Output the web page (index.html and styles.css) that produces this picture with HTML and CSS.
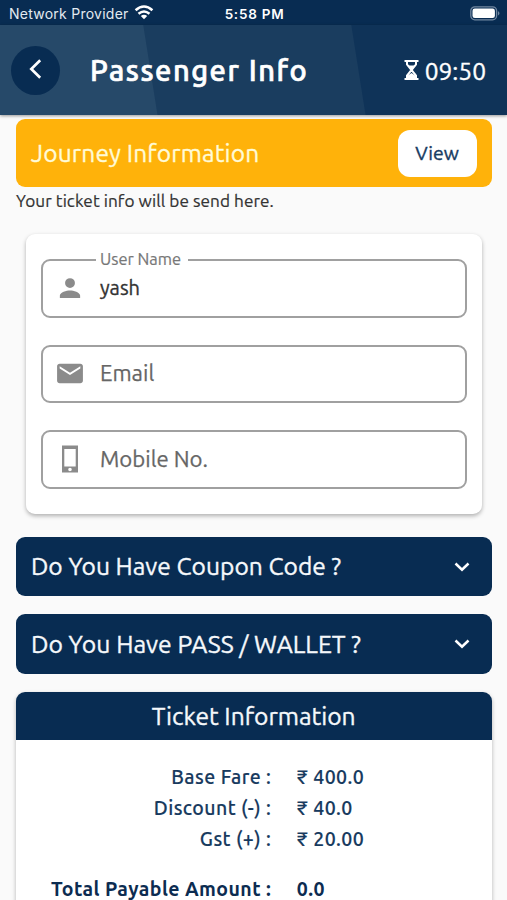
FILE: index.html
```html
<!DOCTYPE html>
<html lang="en">
<head>
<meta charset="utf-8">
<title>Passenger Info</title>
<link rel="stylesheet" href="styles.css">
</head>
<body>
<div class="status">
  <div class="carrier"><span class="carrier-name">Network Provider</span>
    <svg class="wifi" width="20" height="15" viewBox="0 0 20 15" fill="none" stroke="#fff" stroke-width="2.5"><path d="M1.6 5.3Q10-2.3 18.4 5.3M4.5 8.8Q10 4.200 15.5 8.8"/><path d="M6.800 11Q10 8.400 13.200 11L10 14.200Z" fill="#fff" stroke="none"/></svg>
  </div>
  <span class="clock">5:58 PM</span>
  <svg class="battery" width="31" height="15" viewBox="0 0 31 15"><rect x=".8" y=".8" width="25.8" height="13" rx="4" fill="none" stroke="#7187a0" stroke-width="1.3"/><rect x="2.5" y="2.5" width="22.4" height="9.6" rx="2.3" fill="#fff"/><path d="M28 5Q31 7.3 28 9.6Z" fill="#7187a0"/></svg>
</div>
<header class="bar">
  <button class="back" aria-label="Back"><svg width="14" height="20" viewBox="0 0 14 20" fill="none" stroke="#fff" stroke-width="2.7"><path d="M11.200 1.3L2.300 10L11.200 18.7"/></svg></button>
  <h1 class="title">Passenger Info</h1>
  <div class="timer"><svg width="15" height="20" viewBox="0 0 15 20"><path d="M.5 1H14.5M.5 19H14.5" stroke="#fff" stroke-width="2"/><path d="M3 2V4.5L7.5 10L3 15.500V18M12 2V4.500L7.500 10L12 15.500V18" fill="none" stroke="#fff" stroke-width="2"/><path d="M4.500 5.500H10.500L7.500 9.500ZM3 18V16L7.500 13L12 16V18Z" fill="#fff"/></svg><span class="time">09:50</span></div>
</header>
<main class="content">
  <section class="journey"><span class="journey-label">Journey Information</span><button class="view"><span class="view-label">View</span></button></section>
  <p class="note">Your ticket info will be send here.</p>
  <section class="form">
    <div class="field filled">
      <span class="float">User Name</span>
      <svg class="icon" width="32" height="32" viewBox="0 0 24 24"><path fill="#8b8b8b" d="M12 12a3.700 3.700 0 1 0 0-7.400 3.700 3.700 0 0 0 0 7.400zM4.400 19.500v-1.800c0-2.500 5-3.900 7.600-3.900s7.600 1.400 7.600 3.900v1.800z"/></svg>
      <span class="value">yash</span>
    </div>
    <div class="field">
      <svg class="icon" width="31" height="31" viewBox="0 0 24 24"><path fill="#8b8b8b" d="M20 4.500H4c-1.100 0-2 .8-2 1.800v11.300c0 1.100.9 1.900 2 1.900h16c1.100 0 2-.8 2-1.900V6.300c0-1-.9-1.800-2-1.800zm0 3.700l-8 5-8-5V6.400l8 5 8-5z"/></svg>
      <span class="hint email">Email</span>
    </div>
    <div class="field">
      <svg class="icon" width="32" height="32" viewBox="0 0 32 32"><path fill="#8b8b8b" fill-rule="evenodd" d="M8 2.500H24V29.500H8ZM10.300 6V23.500H21.700V6ZM16 24.700a1.800 1.800 0 1 0 0 3.600a1.800 1.800 0 0 0 0-3.600Z"/></svg>
      <span class="hint mobile">Mobile No.</span>
    </div>
  </section>
  <section class="expand"><span class="coupon">Do You Have Coupon Code ?</span><svg width="16" height="10" viewBox="0 0 16 10" fill="none" stroke="#fff" stroke-width="2.500"><path d="M1.500 1.500L8 7.700L14.500 1.500"/></svg></section>
  <section class="expand"><span class="wallet">Do You Have PASS / WALLET ?</span><svg width="16" height="10" viewBox="0 0 16 10" fill="none" stroke="#fff" stroke-width="2.500"><path d="M1.500 1.500L8 7.700L14.500 1.500"/></svg></section>
  <section class="ticket">
    <h2 class="ticket-head"><span class="ticket-title">Ticket Information</span></h2>
    <div class="fares">
      <span class="key base">Base Fare :</span><span class="amount">₹ 400.0</span>
      <span class="key discount">Discount (-) :</span><span class="amount">₹ 40.0</span>
      <span class="key gst">Gst (+) :</span><span class="amount">₹ 20.00</span>
      <span class="key total">Total Payable Amount :</span><span class="amount total sum">0.0</span>
    </div>
  </section>
</main>
</body>
</html>
```
FILE: styles.css
```css
* { box-sizing: border-box; }
html, body { height: 900px; overflow: hidden; }
body { margin: 0; background: #fafafa; font-family: Ubuntu, "Noto Sans", sans-serif; color: #333; display: flex; flex-direction: column; -webkit-text-stroke: .35px currentColor; }
h1, h2, p { margin: 0; }
button { border: 0; padding: 0; font: inherit; }
svg { display: block; flex: none; }
span { white-space: nowrap; }
.status { height: 25px; flex: none; background: #082c52; color: #fff; display: grid; grid-template-columns: 1fr auto 1fr; align-items: center; padding: 2px 6px 0 9px; font-family: Inter, sans-serif; font-size: 14px; -webkit-text-stroke: 0; }
.carrier { display: flex; align-items: center; gap: 5px; color: #e3eaf0; }
.carrier-name { letter-spacing: .25px; }
.wifi { margin-top: -3px; }
.clock { font-weight: 600; font-size: 13.500px; letter-spacing: .75px; margin-left: -1px; }
.battery { justify-self: end; }
.bar { height: 90px; flex: none; display: flex; align-items: center; padding: 0 21px 0 11px; color: #fff; background: linear-gradient(81deg, #264969 0 155px, #1a3d5f 156px 360.500px, #0f3358 361.500px); box-shadow: 0 1px 3px rgba(0,0,0,.4); z-index: 1; }
.back { width: 49px; height: 49px; border-radius: 50%; background: #082c52; display: flex; align-items: center; justify-content: center; padding-bottom: 2px; }
.title { margin: 0 0 0 30px; font-size: 29px; font-weight: 500; letter-spacing: 1.550px; line-height: 40px; white-space: nowrap; -webkit-text-stroke: .7px currentColor; }
.timer { margin-left: auto; display: flex; align-items: center; gap: 6px; font-size: 24.500px; }
.time { margin-top: 1px; }
.content { padding: 4px 15.500px 0 16px; height: 785px; overflow: hidden; }
.journey { height: 68px; border-radius: 9px; background: #ffb20a; display: flex; align-items: center; justify-content: space-between; padding: 0 15px; color: #fffbd7; font-size: 24.500px; letter-spacing: .15px; }
.view { width: 79px; height: 47px; border-radius: 12px; background: #fff; color: #173b62; font-size: 19.500px; }
.note { font-size: 17.200px; line-height: 28px; color: #333; letter-spacing: .06px; -webkit-text-stroke: .2px currentColor; }
.form { margin: 19px 10px 0; height: 280px; padding: 25px 15px 0; display: flex; flex-direction: column; gap: 27px; border-radius: 9px; background: #fff; box-shadow: 0 2px 4px rgba(0,0,0,.3); }
.field { height: 58.500px; flex: none; border: 2px solid #a0a0a0; border-radius: 9px; padding: 0 0 2px 12px; display: flex; align-items: center; position: relative; }
.icon { width: 32px; margin: 2px 13px 0 -1px; }
.value, .hint { margin-left: 1px; }
.float { position: absolute; left: 53px; top: -14px; height: 24px; line-height: 24px; padding: 0 7px 0 4px; background: #fff; color: #777; font-size: 16.500px; -webkit-text-stroke: .2px currentColor; }
.value { font-size: 20px; color: #333; }
.hint { font-size: 22.200px; color: #666; -webkit-text-stroke: .25px currentColor; }
.expand { height: 59.500px; margin-top: 18px; border-radius: 9px; background: #082c52; color: #f5f8fb; display: flex; align-items: center; justify-content: space-between; padding: 0 22px 0 15px; }
.expand svg { margin-top: 1px; }
.coupon { font-size: 24.600px; }
.wallet { font-size: 24.750px; }
.form + .expand { margin-top: 22.500px; }
.ticket { margin-top: 18px; height: 240px; border-radius: 9px; background: #fff; box-shadow: 0 2px 4px rgba(0,0,0,.28); overflow: hidden; }
.ticket-head { height: 48px; background: #082c52; color: #f5f8fb; display: flex; align-items: center; justify-content: center; font-size: 24.600px; font-weight: 400; padding-top: 1px; }
.fares { padding-top: 22.500px; display: grid; grid-template-columns: 255.300px auto; column-gap: 25.500px; grid-template-rows: 31px 31px 31px 19px; justify-content: start; font-size: 19.500px; letter-spacing: .43px; font-weight: 500; color: #173a5e; line-height: 31px; -webkit-text-stroke: .15px currentColor; }
.key { justify-self: end; }
.total { grid-row: 5; font-weight: 700; color: #0c2c51; -webkit-text-stroke: 0; }
```
